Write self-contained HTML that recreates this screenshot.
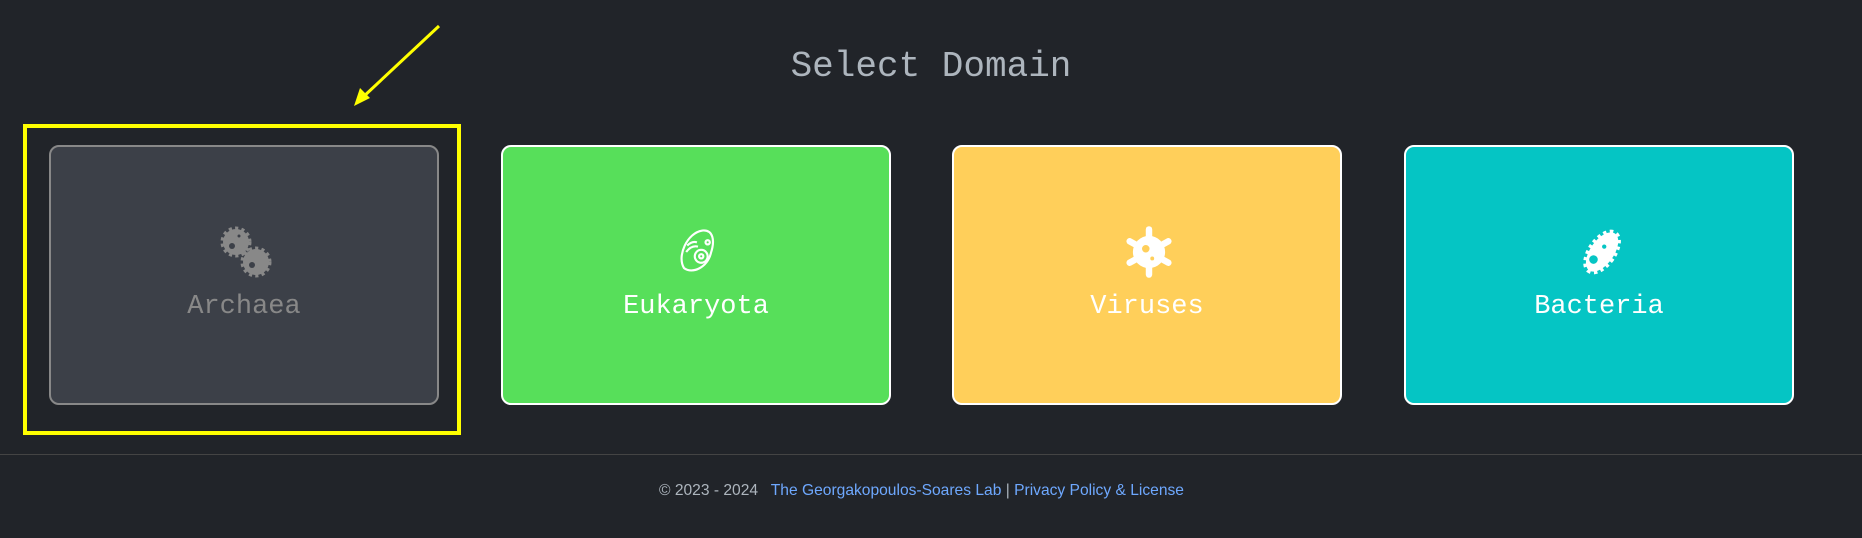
<!DOCTYPE html>
<html><head><meta charset="utf-8"><style>
body{margin:0;width:1862px;height:538px;background:#212429;position:relative;overflow:hidden;font-family:"Liberation Mono",monospace}
.t{position:absolute;top:46px;left:0;width:1862px;text-align:center;font-size:36px;color:#adb5bd}
.c{position:absolute;top:145px;width:386px;height:256px;border:2px solid #fff;border-radius:10px;box-sizing:content-box}
.c svg{position:absolute;left:166px;top:76px}
.c span{position:absolute;top:145px;left:0;width:100%;text-align:center;font-size:27px;color:#fff}
.hr{position:absolute;top:454px;left:0;width:1862px;height:1px;background:#444}
.f{position:absolute;top:482px;left:659px;font-family:"Liberation Sans",sans-serif;font-size:15.6px;color:#adb5bd}
.f a{color:#6ea8fe;text-decoration:none}
</style></head><body>
<div class="t">Select Domain</div>
<svg style="position:absolute;left:0;top:0" width="500" height="450">
<line x1="439" y1="26" x2="362" y2="98" stroke="#ffff00" stroke-width="3"/>
<polygon points="354,106 360,88 370,98" fill="#ffff00"/>
<rect x="25" y="126" width="434" height="307" fill="none" stroke="#ffff00" stroke-width="4"/>
</svg>
<div class="c" style="left:49px;background:#3c4048;border-color:#888"><svg width="58" height="58" viewBox="0 0 58 58"><g fill="#888"><circle cx="19" cy="19" r="13" stroke="#888" stroke-width="5" stroke-dasharray="3 3"/><circle cx="39" cy="39" r="13" stroke="#888" stroke-width="5" stroke-dasharray="3 3"/></g><circle cx="15" cy="23" r="3" fill="#3c4048"/><circle cx="35" cy="42" r="3" fill="#3c4048"/><circle cx="22" cy="13" r="1.5" fill="#3c4048"/></svg><span style="color:#888">Archaea</span></div>
<div class="c" style="left:501px;background:#57df5a"><svg width="58" height="58" viewBox="0 0 54 54" fill="none" stroke="#fff" stroke-width="2"><path d="M14 42C7 31 17 9 31 7c10-1 12 9 8 21-3 13-17 20-25 14z"/><circle cx="30" cy="31" r="6"/><circle cx="30" cy="31" r="2"/><path d="M16 27c3-4 7-6 11-5M17 21c3-3 6-4 9-3"/><circle cx="36" cy="18" r="2"/></svg><span>Eukaryota</span></div>
<div class="c" style="left:952px;background:#ffcf5a"><svg width="58" height="58" viewBox="0 0 54 54"><g fill="#fff"><circle cx="27" cy="27" r="15"/><g stroke="#fff" stroke-width="6" stroke-linecap="round"><line x1="27" y1="6" x2="27" y2="48"/><line x1="9" y1="17" x2="45" y2="37"/><line x1="9" y1="37" x2="45" y2="17"/></g></g><circle cx="24" cy="24" r="3.5" fill="#ffcf5a"/><circle cx="30" cy="33" r="1.8" fill="#ffcf5a"/></svg><span>Viruses</span></div>
<div class="c" style="left:1404px;background:#05c5c4"><svg width="58" height="58" viewBox="0 0 54 54"><g fill="#fff" stroke="#fff" stroke-width="5" stroke-dasharray="3 3"><ellipse cx="28" cy="27" rx="11" ry="21" transform="rotate(35 28 27)"/></g><circle cx="20" cy="34" r="4" fill="#05c5c4"/><circle cx="30" cy="22" r="2" fill="#05c5c4"/></svg><span>Bacteria</span></div>
<div class="hr"></div>
<div class="f">© 2023 - 2024 &nbsp; <a>The Georgakopoulos-Soares Lab</a> | <a>Privacy Policy &amp; License</a></div>
</body></html>
